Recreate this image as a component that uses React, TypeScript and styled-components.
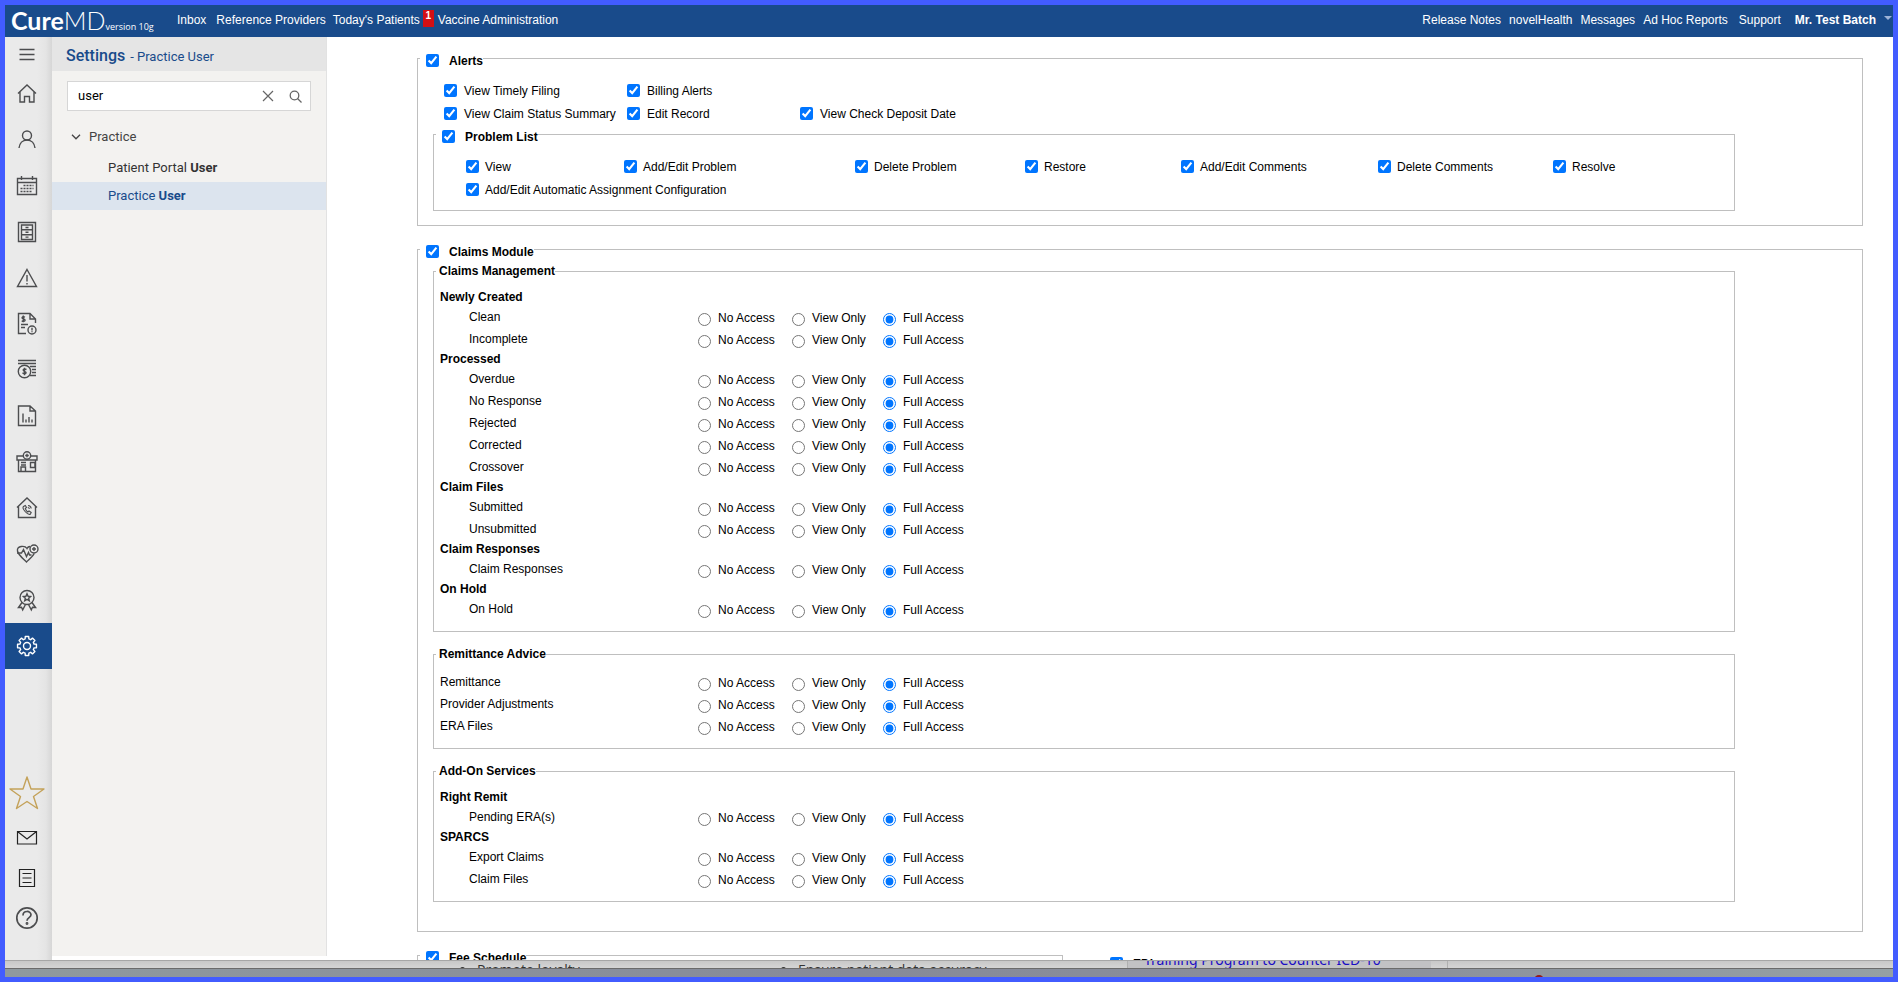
import React from 'react';
import styled, { createGlobalStyle } from 'styled-components';

const GlobalStyle = createGlobalStyle`
  *, *::before, *::after { box-sizing: border-box; }
  body { margin: 0; }
  button, input { font: inherit; color: inherit; }
`;

const arial = '"Liberation Sans", Arial, sans-serif';
const roboto = 'Roboto, "Liberation Sans", sans-serif';

/* ---------- shell ---------- */

const Frame = styled.div`
  height: 100vh;
  display: flex;
  flex-direction: column;
  border: 5px solid #425cff;
  background: #fff;
  color: #000;
  font: 12px/14px ${arial};
`;

const TopBar = styled.header`
  flex: none;
  height: 32px;
  display: flex;
  align-items: flex-start;
  background: #194b8b;
  color: #fff;
`;

const Logo = styled.a`
  width: 172px;
  padding-left: 6px;
  display: flex;
  align-items: baseline;
  color: #fff;
  text-decoration: none;
  font: 700 25px/30px Lato, "Open Sans", sans-serif;
`;

const LogoLight = styled.span`
  font-weight: 300;
`;

const Version = styled.span`
  font: 9px/12px "Open Sans", "Noto Sans", sans-serif;
`;

const NavLink = styled.a<{ $gap: number; $bold?: boolean }>`
  margin-right: ${(p) => p.$gap}px;
  padding-top: 8px;
  color: #fff;
  font-weight: ${(p) => (p.$bold ? 700 : 400)};
  text-decoration: none;
  white-space: nowrap;
`;

const Badge = styled.span`
  width: 11px;
  margin: 5px 4px 0 0;
  background: #d40f14;
  font: 700 10px/12px ${arial};
  text-align: center;
`;

const TopLinks = styled.nav`
  flex: 1;
  display: flex;
`;

const AccountCaret = styled.span`
  margin-top: 11px;
  margin-right: 1px;
  border: 4px solid transparent;
  border-top-color: #9db3d8;
  border-bottom: 0;
`;

const Workspace = styled.div`
  flex: 1;
  min-height: 0;
  display: flex;
`;

/* ---------- icon rail ---------- */

const Rail = styled.nav`
  flex: none;
  width: 47px;
  padding-bottom: 22px;
  display: flex;
  flex-direction: column;
  background: linear-gradient(to right, #eaeaea 32px, #e4e4e4 41px, #d6d6d6);
`;

const RailButton = styled.button<{ $height: number; $active?: boolean }>`
  flex: none;
  height: ${(p) => p.$height}px;
  margin: 0;
  padding: 0 3px 0 0;
  display: flex;
  align-items: center;
  justify-content: center;
  border: 0;
  background: ${(p) => (p.$active ? '#194b8b' : 'none')};
  color: ${(p) => (p.$active ? '#fff' : '#4c4d4f')};
`;

const RailSpacer = styled.div`
  flex: 1;
`;

/* ---------- settings panel ---------- */

const Panel = styled.aside`
  flex: none;
  width: 275px;
  margin-bottom: 4px;
  border-right: 1px solid #e2e2e2;
  background: #f3f2f0;
  font-family: ${roboto};
  font-size: 13px;
`;

const PanelTitle = styled.h1`
  height: 34px;
  margin: 0;
  padding: 3px 14px 0;
  display: flex;
  align-items: baseline;
  gap: 5px;
  background: #e5e5e5;
  color: #194b8b;
  font: 500 16px/32px ${roboto};
`;

const PanelSubtitle = styled.span`
  font-size: 13px;
  font-weight: 400;
`;

const SearchBox = styled.div`
  height: 30px;
  margin: 10px 15px 0;
  padding-right: 6px;
  display: flex;
  align-items: center;
  border: 1px solid #d6d6d6;
  background: #fff;
`;

const SearchInput = styled.input`
  flex: 1;
  min-width: 0;
  padding: 0 10px;
  border: 0;
  outline: 0;
  background: none;
  color: #000;
  font: 13px/18px ${roboto};
`;

const IconButton = styled.button`
  width: 18px;
  height: 18px;
  margin-left: 9px;
  padding: 0;
  display: flex;
  align-items: center;
  justify-content: center;
  border: 0;
  background: none;
  color: #666;
`;

const GroupButton = styled.button`
  width: 100%;
  height: 30px;
  margin: 11px 0 2px;
  padding: 0 19px;
  display: flex;
  align-items: center;
  gap: 8px;
  border: 0;
  background: none;
  color: #444;
`;

const TreeLink = styled.a<{ $active?: boolean }>`
  display: block;
  padding-left: 56px;
  background: ${(p) => (p.$active ? '#dce4ee' : 'none')};
  color: ${(p) => (p.$active ? '#194b8b' : '#333')};
  line-height: 28px;
  text-decoration: none;
`;

/* ---------- permissions form ---------- */

const Main = styled.main`
  flex: 1;
  min-width: 0;
  padding: 12px 30px 0 90px;
  overflow: hidden;
`;

const Module = styled.fieldset<{ $bottom: number }>`
  min-width: 0;
  margin: 0 0 14px;
  padding: 0 127px ${(p) => p.$bottom}px 15px;
  border: 1px solid #bfbfbf;
`;

const CheckLegend = styled.legend<{ $outdent: number }>`
  height: 18px;
  margin-left: -${(p) => p.$outdent}px;
  padding: 4px 0 0 6px;
  display: flex;
  align-items: center;
  font-weight: 700;
`;

const Section = styled.fieldset<{ $indent?: boolean }>`
  min-width: 0;
  margin: 0;
  padding: ${(p) => (p.$indent ? '12px 0 9px 32px' : '10px 0 11px 6px')};
  border: 1px solid #bfbfbf;
`;

const SectionLegend = styled.legend`
  height: 14px;
  margin-left: -4px;
  padding: 0 0 0 3px;
  font-weight: 700;
`;

const Sections = styled.div`
  padding-top: 6px;
  display: grid;
  gap: 15px;
`;

const CheckGrid = styled.div<{ $columns: string }>`
  display: grid;
  grid-template-columns: ${(p) => p.$columns};
  grid-auto-rows: 23px;
  align-items: center;
`;

const AlertChecks = styled(CheckGrid)`
  padding: 12px 0 0 11px;
`;

const CheckLabel = styled.label<{ $gap?: number; $span?: number; $startRow?: boolean }>`
  grid-column: ${(p) => (p.$startRow ? '1 / ' : '')}span ${(p) => p.$span ?? 1};
  display: flex;
  align-items: center;
  gap: ${(p) => p.$gap ?? 6}px;
  white-space: nowrap;
`;

const CheckText = styled.span`
  padding-top: 1px;
`;

const Check = styled.input`
  flex: none;
  width: 13px;
  height: 13px;
  margin: 0;
`;

const Heading = styled.h2`
  margin: 0;
  font-size: 12px;
  line-height: 18px;
`;

const AccessRow = styled.div`
  height: 22px;
  display: grid;
  grid-template-columns: 258px 94px 91px auto;
`;

const AccessName = styled.span<{ $indent?: boolean }>`
  padding-left: ${(p) => (p.$indent ? 29 : 0)}px;
  line-height: 22px;
`;

const RadioLabel = styled.label`
  padding-top: 2px;
  display: flex;
  align-items: center;
  gap: 7px;
`;

const Radio = styled.input`
  width: 13px;
  height: 13px;
  margin: 3px 0 0;
`;

const LastRow = styled.div`
  display: flex;
  gap: 47px;
`;

const FeeModule = styled(Module)`
  flex: 0 0 646px;
`;

const LooseCheck = styled.div`
  padding-top: 10px;
  font-weight: 700;
`;

/* ---------- windows showing below the form ---------- */

const BackWindow = styled.div`
  flex: none;
  height: 9px;
  display: grid;
  grid-template-columns: 472px 321px 329px 304px 16px 1fr;
  overflow: hidden;
  border-top: 1px solid #a6a6a6;
  border-bottom: 1px solid #6b6b6b;
  background: linear-gradient(#c8c8c8, #d4d4d4);
  color: #333;
  font: 14px/18px "Open Sans", "Noto Sans", sans-serif;
`;

const BackItem = styled.span`
  display: list-item;
  list-style: disc;
  white-space: nowrap;
`;

const BackCell = styled.div<{ $shade?: boolean; $line?: boolean }>`
  padding-left: ${(p) => (p.$shade ? 16 : 0)}px;
  border-left: ${(p) => (p.$line ? '1px solid #b0b0b0' : '0')};
  background: ${(p) => (p.$shade ? '#c2c2c4' : 'none')};
`;

const BackLink = styled.a`
  display: block;
  margin-top: -10px;
  color: #1a0dc4;
  font: 14px/18px "Noto Sans", "Open Sans", sans-serif;
  text-decoration: none;
  white-space: nowrap;
`;

const Desktop = styled.div`
  flex: none;
  height: 8px;
  overflow: hidden;
  background: linear-gradient(to right, #8f999e, #868a99 45%, #8a8e9a 70%, #95a0a4);
  display: flex;
`;

const DesktopDot = styled.span`
  width: 10px;
  height: 10px;
  margin: 6px 0 0 81%;
  border-radius: 5px;
  background: #941b1b;
`;

/* ---------- icons ---------- */

const Icon = ({ size = 24, width = 1.4, children }: { size?: number; width?: number; children: React.ReactNode }) => (
  <svg width={size} height={size} viewBox="0 0 24 24" fill="none" stroke="currentColor" strokeWidth={width} aria-hidden="true">
    {children}
  </svg>
);

const gearPath = (() => {
  const pts: string[] = [];
  for (let i = 0; i < 8; i++) {
    const a = (i * Math.PI) / 4;
    [[-0.26, 7.3], [-0.18, 9.6], [0.18, 9.6], [0.26, 7.3]].forEach(([d, r]) => {
      pts.push(`${(12 + r * Math.sin(a + d)).toFixed(2)} ${(12 - r * Math.cos(a + d)).toFixed(2)}`);
    });
  }
  return `M${pts.join('L')}Z`;
})();

const icons: Record<string, React.ReactNode> = {
  menu: <path d="M4.500 7.500h15M4.500 12.500h15M4.500 17.500h15" />,
  home: <path d="M3 11.500 12 3l9 8.500M5 10v10h4.500v-5.500h5V20H19V10" />,
  user: (
    <>
      <circle cx="12" cy="7.500" r="4.500" />
      <path d="M4 20c.5-4.500 3.500-8 8-8s7.500 3.500 8 8" />
    </>
  ),
  calendar: (
    <>
      <path d="M2.500 4.500h19v16h-19zM2.500 8.500h19M6.500 2v4M17.500 2v4" />
      <path d="M8.500 11.500h10M5.500 14.500h13M5.500 17.500h11" strokeDasharray="2 1" />
    </>
  ),
  cabinet: (
    <>
      <path d="M3.500 2.500h17v19h-17z" />
      <path d="M6.500 5h11v14.500h-11zM6.500 9.800h11M6.500 14.700h11M10.500 7.500h3M10.500 12.300h3M10.500 17.100h3" />
    </>
  ),
  warning: <path d="M12 3.500 21.500 20.500h-19zM12 9v6.500M12 17v1.500" />,
  invoice: (
    <>
      <path d="M11 21.500H3.500v-20H15l5.500 5.500v4M15 1.500V7h5.500" />
      <path d="M10 5.200c-3-1.200-4 1.300-1.500 1.800s2 3-1.800 2M8.300 3.500v6.700M6 12.500h7M6 15.500h4" />
      <circle cx="17" cy="18" r="4" />
      <path d="M17 15.800v2.700M17 19.300v1" />
    </>
  ),
  money: (
    <>
      <path d="M3 2.500h18M3 5.500h18M15 8.500h6M17 11.500h4M17 14.500h4M15 17.500h6" />
      <circle cx="9.500" cy="13.500" r="6.200" />
      <path d="M11.500 11.500c-3-1.500-4.500 1-2 1.800s2 3.200-2 1.700M9.500 9.700v7.600" />
    </>
  ),
  report: <path d="M3.500 2h11.500l5.500 5v14.500h-17zM15 2v5h5.500M8 18.500v-9M11 18.500v-3M14 18.500v-5.500M17 18.500v-3" />,
  hospital: (
    <>
      <path d="M8 6H2v4h20V6h-6M3.500 10v11.500h17V10" />
      <circle cx="12" cy="5.500" r="3.700" />
      <path d="M12 3.700v3.600M10.200 5.500h3.600M6 12.500h5M6 15h5M6 21v-4h4.500v4M15.500 12.500h4.500v5h-4.500z" />
    </>
  ),
  phoneHome: (
    <>
      <path d="M2 11.500 12 2l10 9.500M3.500 10v11.500h17V10" />
      <path d="M8.500 10.500c-2 2 4.500 9.500 7 7.500l.7-1.500-2.200-1.500-1.200 1c-1.300-.8-2-2-2.500-3.500l1.200-1-1.200-2zM13 9.500c1.800.2 3 1.300 3.200 3M12.800 11.500c1 .1 1.500.8 1.600 1.500" strokeWidth="1.100" />
    </>
  ),
  heart: (
    <>
      <path d="M15 4.500c-1.400 0-2.400.8-3 2-2-3.200-10.500-3-9.500 2.500C3.200 13 9 17.500 11.500 20c2.500-2.500 6-5 7.700-8.500" />
      <path d="M2 11h4.500l2-3.500 3 7 2-4 1 2.500h2" />
      <circle cx="19" cy="7" r="4" />
      <path d="M19 5v4M17 7h4" />
    </>
  ),
  award: (
    <>
      <circle cx="12" cy="9.500" r="7" />
      <path d="m12 5.800 1.100 2.500 2.500.2-1.900 1.800.6 2.500-2.300-1.400-2.300 1.400.6-2.500-1.900-1.800 2.500-.2zM7 14.500l-3.500 5 3-.3 1.200 2.600 2.800-5.300M17 14.500l3.500 5-3-.3-1.200 2.600-2.800-5.300" />
    </>
  ),
  settings: (
    <>
      <path d={gearPath} strokeLinejoin="round" />
      <circle cx="12" cy="12" r="3.500" />
    </>
  ),
};

const railItems: [string, string][] = [
  ['home', 'Home'],
  ['user', 'Patient'],
  ['calendar', 'Scheduler'],
  ['cabinet', 'Documents'],
  ['warning', 'Alerts'],
  ['invoice', 'Claims'],
  ['money', 'Payments'],
  ['report', 'Reports'],
  ['hospital', 'Facility'],
  ['phoneHome', 'Telehealth'],
  ['heart', 'Wellness'],
  ['award', 'Quality'],
  ['settings', 'Settings'],
];

/* ---------- data ---------- */

type Group = { heading?: string; rows: string[] };

const claimSections: { title: string; groups: Group[] }[] = [
  {
    title: 'Claims Management',
    groups: [
      { heading: 'Newly Created', rows: ['Clean', 'Incomplete'] },
      { heading: 'Processed', rows: ['Overdue', 'No Response', 'Rejected', 'Corrected', 'Crossover'] },
      { heading: 'Claim Files', rows: ['Submitted', 'Unsubmitted'] },
      { heading: 'Claim Responses', rows: ['Claim Responses'] },
      { heading: 'On Hold', rows: ['On Hold'] },
    ],
  },
  { title: 'Remittance Advice', groups: [{ rows: ['Remittance', 'Provider Adjustments', 'ERA Files'] }] },
  {
    title: 'Add-On Services',
    groups: [
      { heading: 'Right Remit', rows: ['Pending ERA(s)'] },
      { heading: 'SPARCS', rows: ['Export Claims', 'Claim Files'] },
    ],
  },
];

const problemChecks = ['View', 'Add/Edit Problem', 'Delete Problem', 'Restore', 'Add/Edit Comments', 'Delete Comments', 'Resolve'];
const accessLevels = ['No Access', 'View Only', 'Full Access'];

const CheckItem = ({ text, ...rest }: { text: string; $gap?: number; $span?: number; $startRow?: boolean }) => (
  <CheckLabel {...rest}>
    <Check type="checkbox" defaultChecked />
    <CheckText>{text}</CheckText>
  </CheckLabel>
);

const Access = ({ name, group, indent }: { name: string; group: string; indent: boolean }) => (
  <AccessRow role="radiogroup" aria-label={name}>
    <AccessName $indent={indent}>{name}</AccessName>
    {accessLevels.map((level) => (
      <RadioLabel key={level}>
        <Radio type="radio" name={group} defaultChecked={level === 'Full Access'} />
        {level}
      </RadioLabel>
    ))}
  </AccessRow>
);

export default function App() {
  return (
    <>
      <GlobalStyle />
      <Frame>
        <TopBar>
          <Logo href="#">
            Cure<LogoLight>MD</LogoLight>
            <Version>version 10g</Version>
          </Logo>
          <TopLinks>
            <NavLink href="#" $gap={10}>Inbox</NavLink>
            <NavLink href="#" $gap={7}>Reference Providers</NavLink>
            <NavLink href="#" $gap={3}>Today's Patients</NavLink>
            <Badge>1</Badge>
            <NavLink href="#" $gap={0}>Vaccine Administration</NavLink>
          </TopLinks>
          <NavLink href="#" $gap={8}>Release Notes</NavLink>
          <NavLink href="#" $gap={8}>novelHealth</NavLink>
          <NavLink href="#" $gap={8}>Messages</NavLink>
          <NavLink href="#" $gap={11}>Ad Hoc Reports</NavLink>
          <NavLink href="#" $gap={14}>Support</NavLink>
          <NavLink href="#" $gap={8} $bold>Mr. Test Batch</NavLink>
          <AccountCaret />
        </TopBar>

        <Workspace>
          <Rail aria-label="Modules">
            <RailButton $height={34} aria-label="Menu"><Icon>{icons.menu}</Icon></RailButton>
            {railItems.map(([key, label]) => (
              <RailButton key={key} $height={46} $active={key === 'settings'} aria-label={label}>
                <Icon>{icons[key]}</Icon>
              </RailButton>
            ))}
            <RailSpacer />
            <RailButton $height={50} aria-label="Favorites">
              <svg width="38" height="38" viewBox="0 0 38 38" fill="none" stroke="#c4a25a" strokeWidth="1.400" strokeLinejoin="round">
                <path d="M19 3l4 12h13L25.500 22.500l4 12L19 27.500 8.500 34.500l4-12L2 15h13z" />
              </svg>
            </RailButton>
            <RailButton $height={40} aria-label="Messages">
              <svg width="22" height="16" viewBox="0 0 22 16" fill="none" stroke="#222" strokeWidth="1.200">
                <path d="M1.500 1.500h19v12.500h-19zM1.500 1.500 11 9l9.500-7.500" />
              </svg>
            </RailButton>
            <RailButton $height={40} aria-label="Notes">
              <svg width="18" height="20" viewBox="0 0 18 20" fill="none" stroke="#222" strokeWidth="1.200">
                <path d="M1.500 1.500h15v17h-15zM4.500 5.500h9M4.500 10h9M4.500 14.500h9" />
              </svg>
            </RailButton>
            <RailButton $height={40} aria-label="Help">
              <Icon width={1.7}>
                <circle cx="12" cy="12" r="10.200" />
                <path d="M8 9.500c0-5.500 8-5 8-.7 0 3-4 2.700-4 6" />
                <circle cx="12" cy="17.500" r=".6" />
              </Icon>
            </RailButton>
          </Rail>

          <Panel>
            <PanelTitle>
              Settings <PanelSubtitle>- Practice User</PanelSubtitle>
            </PanelTitle>
            <SearchBox>
              <SearchInput type="text" aria-label="Search settings" defaultValue="user" />
              <IconButton aria-label="Clear">
                <svg width="12" height="12" viewBox="0 0 12 12" stroke="currentColor" strokeWidth="1.200">
                  <path d="M1 1l10 10M11 1L1 11" />
                </svg>
              </IconButton>
              <IconButton aria-label="Search">
                <svg width="13" height="13" viewBox="0 0 13 13" fill="none" stroke="currentColor" strokeWidth="1.300">
                  <circle cx="5.500" cy="5.500" r="4.300" />
                  <path d="M8.500 8.500l4 4" />
                </svg>
              </IconButton>
            </SearchBox>
            <GroupButton>
              <svg width="10" height="6" viewBox="0 0 10 6" fill="none" stroke="currentColor" strokeWidth="1.300">
                <path d="M1 .8l4 4 4-4" />
              </svg>
              Practice
            </GroupButton>
            <TreeLink href="#">Patient Portal <b>User</b></TreeLink>
            <TreeLink href="#" $active>Practice <b>User</b></TreeLink>
          </Panel>

          <Main>
            <Module $bottom={14}>
              <CheckLegend $outdent={13}><CheckItem text="Alerts" $gap={10} /></CheckLegend>
              <AlertChecks $columns="183px 173px auto">
                <CheckItem text="View Timely Filing" $gap={7} />
                <CheckItem text="Billing Alerts" $gap={7} />
                <CheckItem text="View Claim Status Summary" $gap={7} $startRow />
                <CheckItem text="Edit Record" $gap={7} />
                <CheckItem text="View Check Deposit Date" $gap={7} />
              </AlertChecks>
              <Section $indent>
                <CheckLegend $outdent={30}><CheckItem text="Problem List" $gap={10} /></CheckLegend>
                <CheckGrid $columns="158px 231px 170px 156px 197px 175px auto">
                  {problemChecks.map((text) => <CheckItem key={text} text={text} />)}
                  <CheckItem text="Add/Edit Automatic Assignment Configuration" $startRow $span={2} />
                </CheckGrid>
              </Section>
            </Module>

            <Module $bottom={29}>
              <CheckLegend $outdent={13}><CheckItem text="Claims Module" $gap={10} /></CheckLegend>
              <Sections>
                {claimSections.map((section) => (
                  <Section key={section.title}>
                    <SectionLegend>{section.title}</SectionLegend>
                    {section.groups.map((group, i) => (
                      <React.Fragment key={i}>
                        {group.heading && <Heading>{group.heading}</Heading>}
                        {group.rows.map((row) => (
                          <Access key={row} name={row} group={`${section.title}/${i}/${row}`} indent={!!group.heading} />
                        ))}
                      </React.Fragment>
                    ))}
                  </Section>
                ))}
              </Sections>
            </Module>

            <LastRow>
              <FeeModule $bottom={29}>
                <CheckLegend $outdent={13}><CheckItem text="Fee Schedule" $gap={10} /></CheckLegend>
              </FeeModule>
              <LooseCheck><CheckItem text="EDI" $gap={10} /></LooseCheck>
            </LastRow>
          </Main>
        </Workspace>

        <BackWindow>
          <span />
          <BackItem>Promote loyalty</BackItem>
          <BackItem>Ensure patient data accuracy</BackItem>
          <BackCell $shade $line><BackLink href="#">Training Program to Counter ICD-10</BackLink></BackCell>
          <BackCell />
          <BackCell $line />
        </BackWindow>
        <Desktop><DesktopDot /></Desktop>
      </Frame>
    </>
  );
}
